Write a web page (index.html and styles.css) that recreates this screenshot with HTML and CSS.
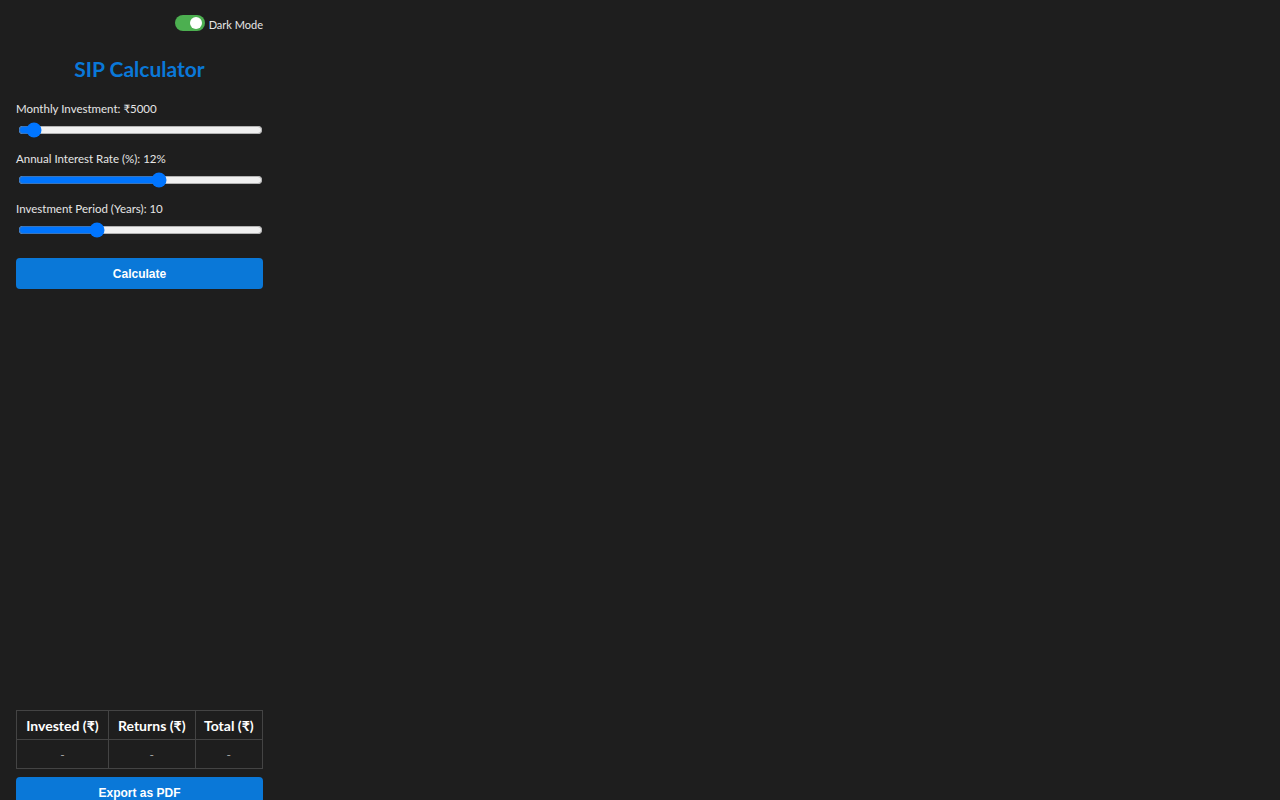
FILE: index.html
```html
<!DOCTYPE html>
<html lang="en">
<head>
<meta charset="utf-8">
<title>SIP Calculator</title>
<link rel="stylesheet" href="styles.css">
</head>
<body>
<div class="container">
  <div class="topbar">
    <label class="switch">
      <span class="switch-track"><span class="switch-knob"></span></span>
      <span class="switch-text">Dark Mode</span>
    </label>
  </div>
  <h1 class="title">SIP Calculator</h1>
  <div class="field">
    <label class="field-label">Monthly Investment: ₹5000</label>
    <input class="slider" type="range" min="1000" max="120000" step="500" value="5000">
  </div>
  <div class="field">
    <label class="field-label">Annual Interest Rate (%): 12%</label>
    <input class="slider" type="range" min="1" max="20" value="12">
  </div>
  <div class="field">
    <label class="field-label">Investment Period (Years): 10</label>
    <input class="slider" type="range" min="1" max="30" value="10">
  </div>
  <button class="btn calc">Calculate</button>
  <div class="chart"></div>
  <table class="results">
    <thead>
      <tr><th>Invested (₹)</th><th>Returns (₹)</th><th>Total (₹)</th></tr>
    </thead>
    <tbody>
      <tr><td>-</td><td>-</td><td>-</td></tr>
    </tbody>
  </table>
  <button class="btn export">Export as PDF</button>
</div>
</body>
</html>
```

FILE: styles.css
```css
html, body {
  margin: 0;
  padding: 0;
  background: #1e1e1e;
}
body {
  color: #e6e6e6;
  font-family: "Lato", "Noto Sans", "DejaVu Sans", sans-serif;
  font-size: 11.5px;
}
.container {
  width: 247px;
  padding: 14px 16px 0 16px;
}
.topbar {
  display: flex;
  justify-content: flex-end;
}
.switch {
  display: flex;
  align-items: center;
  gap: 4px;
}
.switch-track {
  width: 30px;
  height: 16px;
  border-radius: 8px;
  background: #4caf50;
  position: relative;
}
.switch-knob {
  position: absolute;
  right: 3px;
  top: 2px;
  width: 12px;
  height: 12px;
  border-radius: 50%;
  background: #fff;
}
.switch-text {
  font-size: 11px;
  color: #e6e6e6;
  padding-top: 4px;
}
.title {
  margin: 25px 0 20px;
  text-align: center;
  color: #0a78d8;
  font-size: 21px;
  font-weight: 700;
}
.field {
  display: flex;
  flex-direction: column;
  margin-bottom: 9px;
}
.field-label {
  line-height: 16px;
}
.slider {
  margin: 5px 0 4px 2px;
  width: 245px;
}
.btn {
  display: block;
  width: 100%;
  height: 31px;
  border: none;
  border-radius: 4px;
  background: #0a78d8;
  color: #fff;
  font-family: "Liberation Sans", Arial, sans-serif;
  font-size: 12px;
  font-weight: 700;
}
.calc {
  margin-top: 16px;
}
.chart {
  height: 421px;
}
.results {
  width: 100%;
  border-collapse: collapse;
}
.results th, .results td {
  border: 1px solid #444;
  text-align: center;
  height: 28px;
  padding: 0 6px;
  white-space: nowrap;
}
.results th {
  font-size: 14px;
  font-weight: 700;
  color: #fff;
}
.results td {
  color: #aaa;
  font-size: 12px;
}
.export {
  margin-top: 8px;
}
```
